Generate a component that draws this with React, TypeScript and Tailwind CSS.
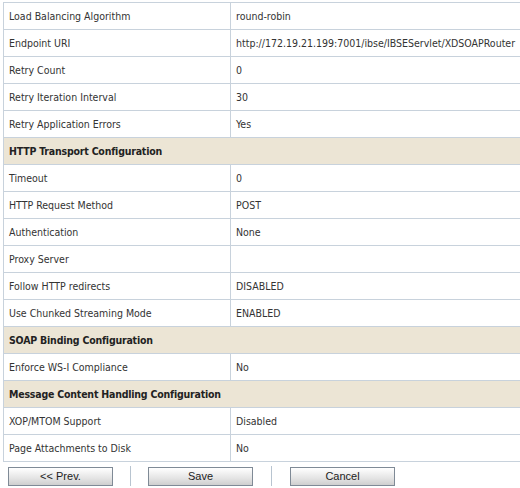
import React from "react";

type Row = { label: string; value?: string; header?: boolean };

const rows: Row[] = [
  { label: "Load Balancing Algorithm", value: "round-robin" },
  { label: "Endpoint URI", value: "http://172.19.21.199:7001/ibse/IBSEServlet/XDSOAPRouter" },
  { label: "Retry Count", value: "0" },
  { label: "Retry Iteration Interval", value: "30" },
  { label: "Retry Application Errors", value: "Yes" },
  { label: "HTTP Transport Configuration", header: true },
  { label: "Timeout", value: "0" },
  { label: "HTTP Request Method", value: "POST" },
  { label: "Authentication", value: "None" },
  { label: "Proxy Server", value: "" },
  { label: "Follow HTTP redirects", value: "DISABLED" },
  { label: "Use Chunked Streaming Mode", value: "ENABLED" },
  { label: "SOAP Binding Configuration", header: true },
  { label: "Enforce WS-I Compliance", value: "No" },
  { label: "Message Content Handling Configuration", header: true },
  { label: "XOP/MTOM Support", value: "Disabled" },
  { label: "Page Attachments to Disk", value: "No" },
];

function Button({ label }: { label: string }) {
  return (
    <button className="w-[105px] h-[19px] border border-[#7f8a96] bg-[linear-gradient(to_bottom,#ffffff,#e4e4e4_60%,#cfcfcf)] text-[11px] text-[#222] leading-none font-['Liberation_Sans',Arial,sans-serif]">
      {label}
    </button>
  );
}

export default function App() {
  return (
    <div className="w-[520px] h-[488px] overflow-hidden bg-white font-['DejaVu_Sans_Condensed','DejaVu_Sans',Tahoma,sans-serif] [font-stretch:condensed] text-[10.5px] text-[#333]">
      <div className="pt-[2px] pl-[3px]">
        <table className="w-[560px] border-collapse">
          <tbody>
            {rows.map((r) =>
              r.header ? (
                <tr key={r.label} className="h-[27px] bg-[#ece5d5]">
                  <td colSpan={2} className="border border-[#c8d2dc] pl-[5px] pt-px font-bold tracking-[-0.2px] text-[#222]">
                    {r.label}
                  </td>
                </tr>
              ) : (
                <tr key={r.label} className="h-[27px]">
                  <td className="w-[227px] border border-[#c8d2dc] pl-[5px] pt-px">{r.label}</td>
                  <td className="border border-[#c8d2dc] pl-[5px] pt-px whitespace-nowrap">{r.value}</td>
                </tr>
              )
            )}
          </tbody>
        </table>
      </div>
      <div className="flex items-center pl-[8px] pt-[4px]">
        <Button label="<< Prev." />
        <div className="w-px h-[20px] bg-[#b8c4d0] mx-[17px]" />
        <Button label="Save" />
        <div className="w-px h-[20px] bg-[#b8c4d0] mx-[18px]" />
        <Button label="Cancel" />
      </div>
    </div>
  );
}
